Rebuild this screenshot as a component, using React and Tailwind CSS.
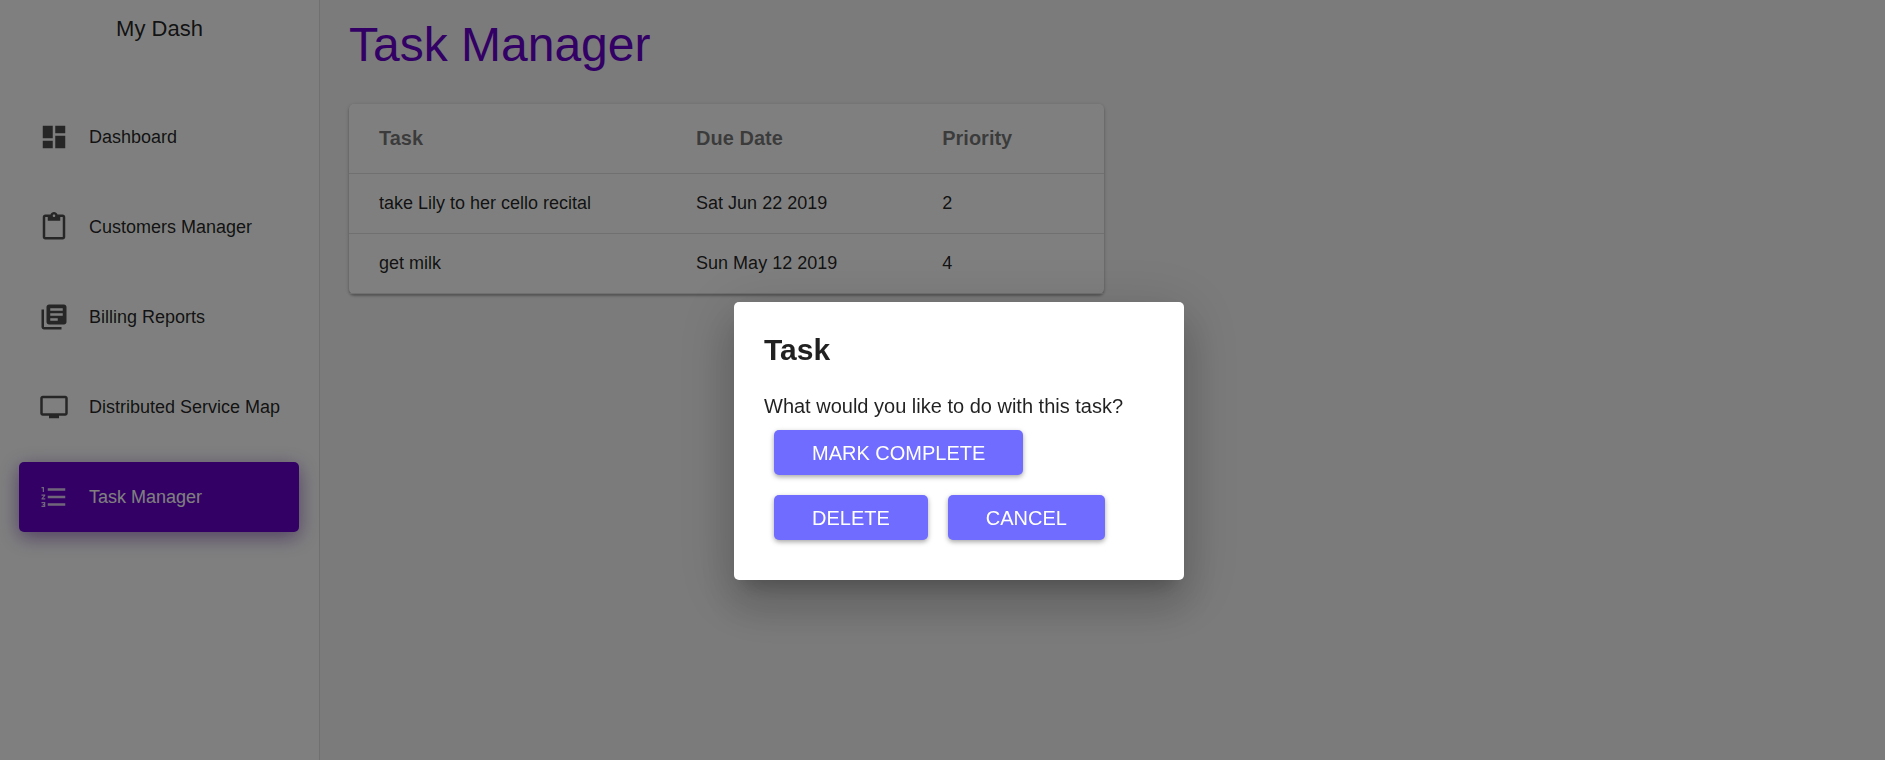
import React from "react";

const ICONS = {
  dashboard: "M3 13h8V3H3v10zm0 8h8v-6H3v6zm10 0h8V11h-8v10zm0-18v6h8V3h-8z",
  clipboard:
    "M19 2h-4.18C14.4.84 13.3 0 12 0c-1.3 0-2.4.84-2.82 2H5c-1.1 0-2 .9-2 2v16c0 1.1.9 2 2 2h14c1.1 0 2-.9 2-2V4c0-1.1-.9-2-2-2zm-7 0c.55 0 1 .45 1 1s-.45 1-1 1-1-.45-1-1 .45-1 1-1zm7 18H5V4h2v3h10V4h2v16z",
  library:
    "M4 6H2v14c0 1.1.9 2 2 2h14v-2H4V6zm16-4H8c-1.1 0-2 .9-2 2v12c0 1.1.9 2 2 2h12c1.1 0 2-.9 2-2V4c0-1.1-.9-2-2-2zm-1 9H9V9h10v2zm-4 4H9v-2h6v2zm4-8H9V5h10v2z",
  tv: "M21 3H3c-1.1 0-2 .9-2 2v12c0 1.1.9 2 2 2h5v2h8v-2h5c1.1 0 1.99-.9 1.99-2L23 5c0-1.1-.9-2-2-2zm0 14H3V5h18v12z",
  list: "M2 17h2v.5H3v1h1v.5H2v1h3v-4H2v1zm1-9h1V4H2v1h1v3zm-1 3h1.8L2 13.1v.9h3v-1H3.2L5 10.9V10H2v1zm5-6v2h14V5H7zm0 14h14v-2H7v2zm0-6h14v-2H7v2z",
};

const NAV = [
  { label: "Dashboard", icon: "dashboard" },
  { label: "Customers Manager", icon: "clipboard" },
  { label: "Billing Reports", icon: "library" },
  { label: "Distributed Service Map", icon: "tv" },
  { label: "Task Manager", icon: "list", active: true },
];

const TASKS = [
  { task: "take Lily to her cello recital", due: "Sat Jun 22 2019", priority: 2 },
  { task: "get milk", due: "Sun May 12 2019", priority: 4 },
];

function Icon({ name }) {
  return (
    <svg viewBox="0 0 24 24" className="size-[30px] shrink-0" fill="currentColor" aria-hidden="true">
      <path d={ICONS[name]} />
    </svg>
  );
}

function NavItem({ label, icon, active }) {
  return (
    <a
      href="#"
      aria-current={active ? "page" : undefined}
      className={
        "flex h-[70px] items-center gap-5 rounded-[5px] pl-5 text-lg whitespace-nowrap " +
        (active
          ? "bg-[#6600cc] text-white shadow-[0_5px_20px_rgba(70,0,140,0.5)]"
          : "text-black/87")
      }
    >
      <span className={active ? "text-white/80" : "text-black/70"}>
        <Icon name={icon} />
      </span>
      {label}
    </a>
  );
}

function Sidebar() {
  return (
    <aside className="w-[320px] shrink-0 border-r border-black/12 bg-white">
      <div className="py-3 text-center text-[22px] leading-[34px] text-black/87">My Dash</div>
      <nav className="mt-11 flex flex-col gap-5 pr-5 pl-[19px]">
        {NAV.map((item) => (
          <NavItem key={item.label} {...item} />
        ))}
      </nav>
    </aside>
  );
}

function TaskTable() {
  return (
    <div className="w-full max-w-[755px] rounded-[5px] bg-white shadow-[0_1px_4px_rgba(0,0,0,0.2),0_2px_2px_rgba(0,0,0,0.2)]">
      <table className="w-full table-fixed text-left">
        <colgroup>
          <col className="w-[42%]" />
          <col className="w-[32.6%]" />
          <col />
        </colgroup>
        <thead>
          <tr className="h-[69px] border-b border-[#e0e0e0] text-xl text-black/54">
            <th scope="col" className="pl-[30px]">Task</th>
            <th scope="col" className="pl-[30px]">Due Date</th>
            <th scope="col" className="pl-[30px]">Priority</th>
          </tr>
        </thead>
        <tbody>
          {TASKS.map((t) => (
            <tr key={t.task} className="h-[60px] border-b border-[#e0e0e0] text-lg text-black/87">
              <td className="pl-[30px]">{t.task}</td>
              <td className="pl-[30px]">{t.due}</td>
              <td className="pl-[30px]">{t.priority}</td>
            </tr>
          ))}
        </tbody>
      </table>
    </div>
  );
}

function DialogButton({ children }) {
  return (
    <button
      type="button"
      className="h-[45px] rounded-[5px] bg-[#6f6cff] px-[38px] text-xl text-white uppercase shadow-[0_2px_5px_rgba(0,0,0,0.35)]"
    >
      {children}
    </button>
  );
}

function TaskDialog() {
  return (
    <div className="fixed inset-0 bg-black/50">
      <div
        role="dialog"
        aria-modal="true"
        aria-labelledby="dialog-title"
        className="absolute top-[302px] left-[734px] w-[450px] rounded-[5px] bg-white p-[30px] text-black/87 shadow-[0_14px_19px_-9px_rgba(0,0,0,0.2),0_25px_40px_4px_rgba(0,0,0,0.14),0_11px_58px_10px_rgba(0,0,0,0.12)]"
      >
        <h2 id="dialog-title" className="text-3xl font-bold">Task</h2>
        <p className="mt-6 text-xl leading-7">What would you like to do with this task?</p>
        <div className="flex flex-wrap gap-5 p-[10px]">
          <div className="w-full">
            <DialogButton>Mark Complete</DialogButton>
          </div>
          <DialogButton>Delete</DialogButton>
          <DialogButton>Cancel</DialogButton>
        </div>
      </div>
    </div>
  );
}

export default function App() {
  return (
    <div className="flex min-h-screen bg-[#f7f7f7] font-['Liberation_Sans',Arial,sans-serif]">
      <Sidebar />
      <main className="min-w-0 flex-1 px-[29px] pt-4">
        <h1 className="mb-[30px] text-5xl leading-[58px] text-[#6600cc]">Task Manager</h1>
        <TaskTable />
      </main>
      <TaskDialog />
    </div>
  );
}
